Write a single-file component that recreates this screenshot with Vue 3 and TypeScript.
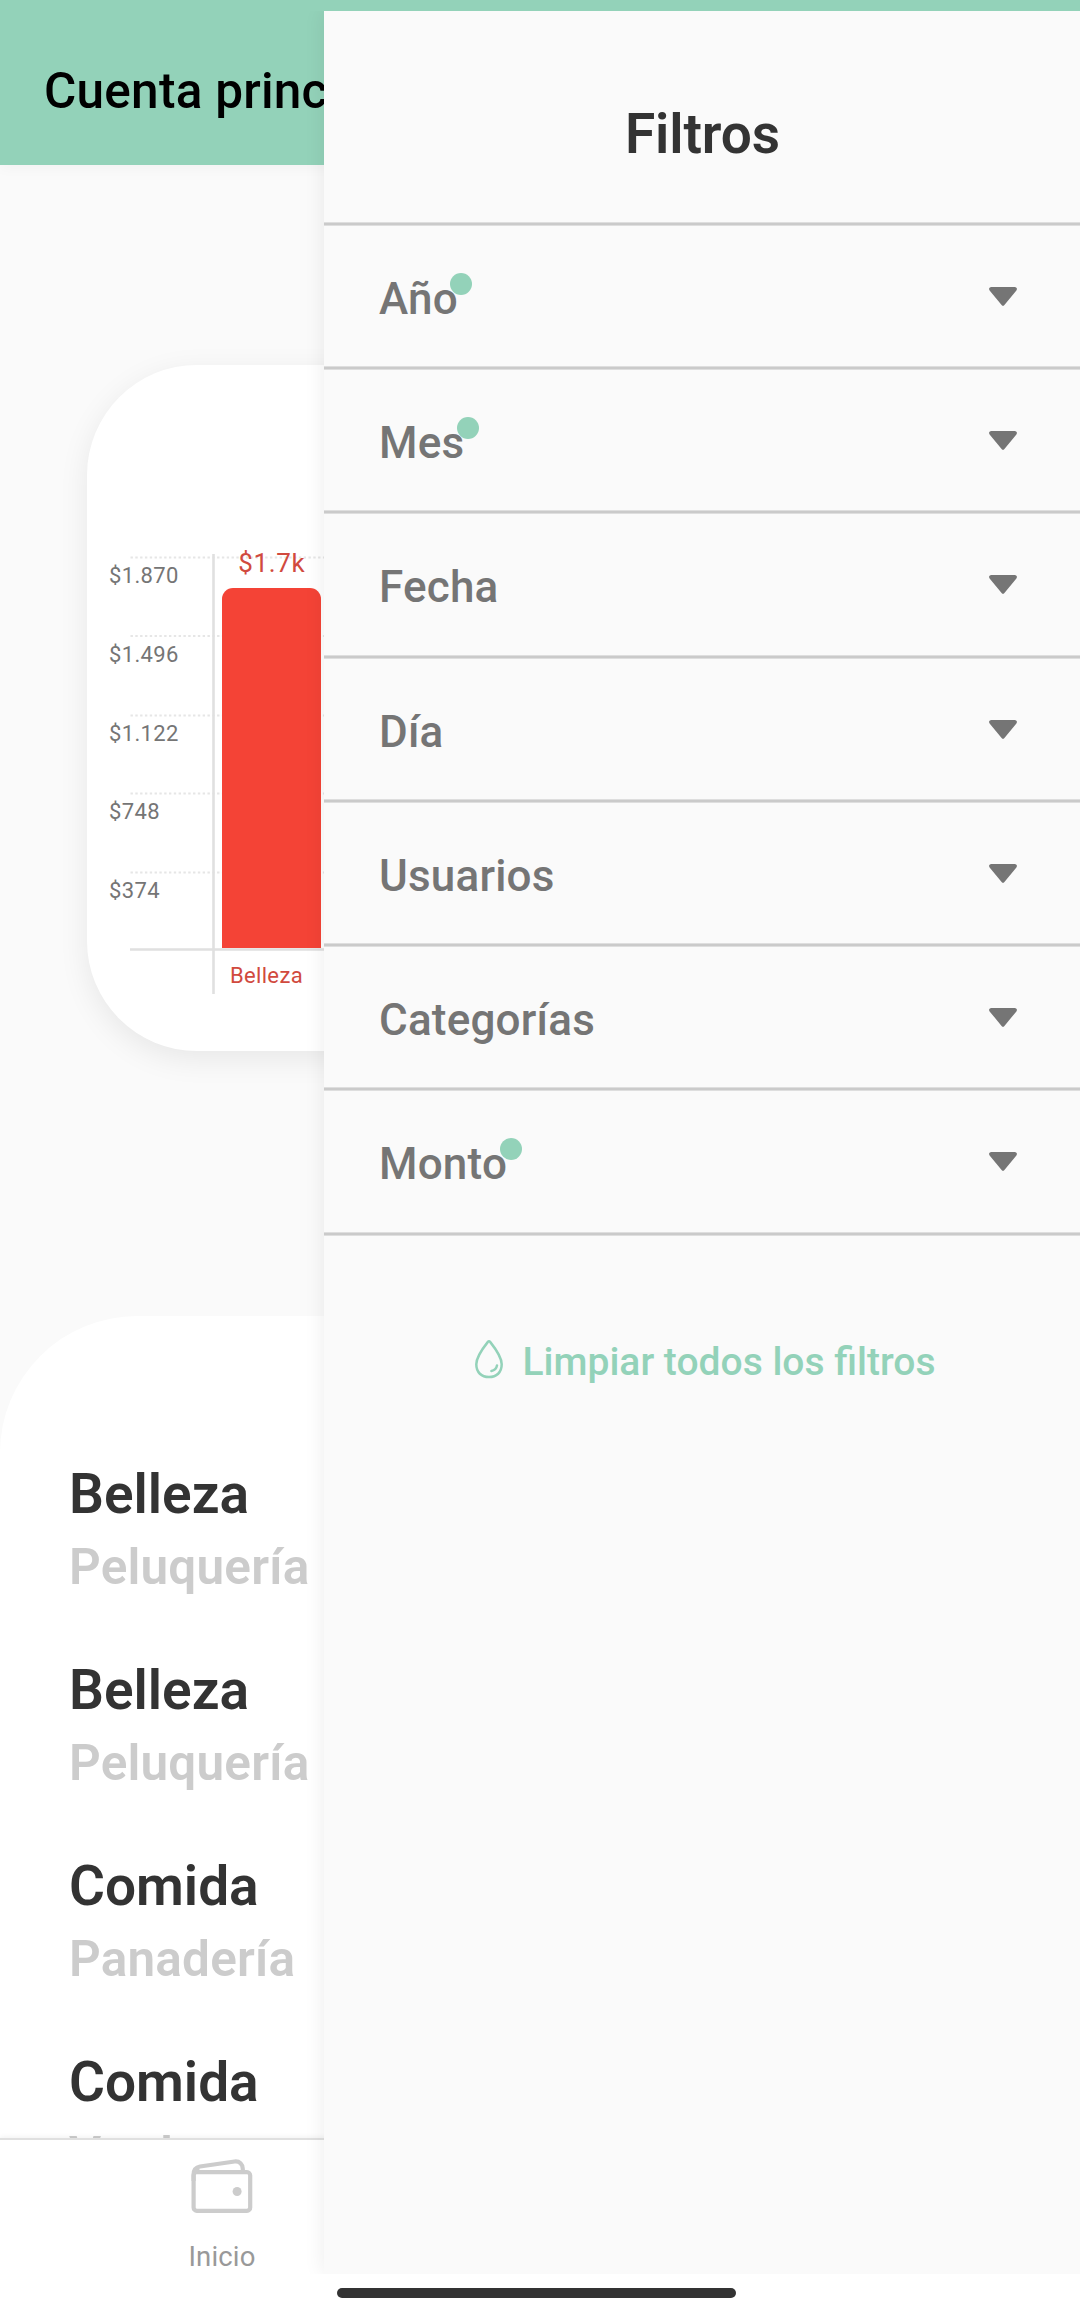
<script setup lang="ts">
interface Filter { label: string; active: boolean }
interface Movement { category: string; detail: string }
interface Tick { label: string; grid: number; base: number }

const filters: Filter[] = [
  { label: 'Año', active: true },
  { label: 'Mes', active: true },
  { label: 'Fecha', active: false },
  { label: 'Día', active: false },
  { label: 'Usuarios', active: false },
  { label: 'Categorías', active: false },
  { label: 'Monto', active: true },
]

const movements: Movement[] = [
  { category: 'Belleza', detail: 'Peluquería' },
  { category: 'Belleza', detail: 'Peluquería' },
  { category: 'Comida', detail: 'Panadería' },
  { category: 'Comida', detail: 'Verdura' },
]

const ticks: Tick[] = [
  { label: '$1.870', grid: 192.5, base: 218 },
  { label: '$1.496', grid: 271, base: 297 },
  { label: '$1.122', grid: 350.5, base: 376 },
  { label: '$748', grid: 428.5, base: 454 },
  { label: '$374', grid: 507.5, base: 533 },
]
</script>

<template>
  <div class="app">
    <div class="screen">
      <header class="topbar"><h1>Cuenta principal</h1></header>
      <main class="content">
        <section class="card">
          <svg class="chart" width="906" height="686" viewBox="0 0 906 686">
            <g class="grid">
              <line v-for="t in ticks" :key="t.label" x1="43.5" x2="906" :y1="t.grid" :y2="t.grid" />
            </g>
            <path class="axis" d="M43 584.5H906M126.5 189V629" />
            <path class="bar" d="M135 583V234a11 11 0 0 1 11-11h77a11 11 0 0 1 11 11V583z" />
            <text v-for="t in ticks" :key="t.label" class="tick" x="22" :y="t.base">{{ t.label }}</text>
            <text class="value" x="151.3" y="207">$1.7k</text>
            <text class="name" x="142.9" y="618">Belleza</text>
          </svg>
        </section>
        <section class="sheet">
          <article v-for="(m, i) in movements" :key="i" class="movement">
            <h2>{{ m.category }}</h2>
            <p>{{ m.detail }}</p>
          </article>
        </section>
      </main>
      <nav class="tabs">
        <div class="tab">
          <svg width="66" height="60" viewBox="0 0 66 60" fill="none" stroke="#ccc" stroke-width="4.2">
            <rect x="4.6" y="17.2" width="56.6" height="38.6" rx="3.2" />
            <path d="M4.6 26V19.5C4.6 15 7.3 12.2 11 11.5L45.6 6.5C50.5 5.9 53.8 9.5 53.8 14V17" />
            <path d="M5.4 17.5L9.5 13.5" />
            <circle cx="48.1" cy="36.5" r="4.5" fill="#ccc" stroke="none" />
          </svg>
          <span>Inicio</span>
        </div>
      </nav>
      <div class="home"><i></i></div>
    </div>

    <div class="overlay">
      <aside class="drawer">
        <div class="drawer-head"><h2>Filtros</h2></div>
        <div v-for="f in filters" :key="f.label" class="filter">
          <span class="label">{{ f.label }}<i v-if="f.active" class="dot"></i></span>
          <svg width="28" height="20" viewBox="0 0 28 20">
            <path d="M2 0H26Q29 .8 27.4 3.4L15.4 17.9Q14 19.6 12.6 17.9L.6 3.4Q-1 .8 2 0z" fill="#757575" />
          </svg>
        </div>
        <button class="clear">
          <svg width="28" height="39" viewBox="0 0 28 39" fill="none" stroke="#93d2b9" stroke-width="2.5">
            <path d="M12.7 2.1Q14 .6 15.3 2.1C20 8 26.7 17 26.7 24.3C26.7 32.5 21.5 37 14 37S1.3 32.5 1.3 24.3C1.3 17 8 8 12.7 2.1z" />
            <path d="M16.4 31Q21.2 30.2 22 25.4" stroke-linecap="round" />
          </svg>
          <span>Limpiar todos los filtros</span>
        </button>
      </aside>
    </div>
  </div>
</template>

<style>
body { margin: 0; }
</style>

<style scoped>
.app {
  position: relative;
  width: 1080px;
  height: 2318px;
  overflow: hidden;
  background: #fafafa;
  font-family: Roboto, "Liberation Sans", sans-serif;
}
h1, h2, p { margin: 0; font-weight: 500; white-space: nowrap; }
.screen { display: flex; flex-direction: column; height: 100%; }
.topbar {
  flex: none;
  box-sizing: border-box;
  height: 165px;
  padding: 62px 0 0 44px;
  background: #93d2b9;
  box-shadow: 0 2px 14px rgba(0, 0, 0, 0.04);
}
.topbar h1 { font-size: 49.5px; line-height: 58px; letter-spacing: 0.25px; color: #000; }
.content { flex: 1; min-height: 0; overflow: hidden; display: flex; flex-direction: column; }
.card {
  flex: none;
  height: 686px;
  margin: 200px 87px 265px;
  border-radius: 110px;
  background: #fff;
  box-shadow: 0 8px 30px rgba(0, 0, 0, 0.08);
}
.chart { display: block; }
.grid line { stroke: #e6e6e6; stroke-width: 2; stroke-dasharray: 2.4 2.41; }
.axis { stroke: #e0e0e0; stroke-width: 2.6; fill: none; }
.bar { fill: #f44336; }
.tick { font-size: 22px; letter-spacing: 0.35px; fill: #757575; }
.value { font-size: 26px; letter-spacing: 0.6px; fill: #d14a3e; }
.name { font-size: 22px; letter-spacing: 0.35px; fill: #d14a3e; }
.sheet {
  flex: none;
  padding: 145px 69px 0;
  border-radius: 137px 137px 0 0;
  background: #fff;
}
.movement { height: 196px; }
.movement h2 { font-size: 55px; line-height: 66px; color: #333; font-weight: 600; }
.movement p { padding-top: 11px; font-size: 49.5px; line-height: 58px; letter-spacing: 0.2px; color: #ccc; font-weight: 600; }
.tabs {
  flex: none;
  display: flex;
  box-sizing: border-box;
  height: 136px;
  border-top: 2px solid #e0e0e0;
  background: #fff;
  box-shadow: 0 -1px 5px rgba(0, 0, 0, 0.06);
}
.tab {
  display: flex;
  flex-direction: column;
  align-items: center;
  width: 443px;
  padding-top: 15px;
  color: #999;
}
.tab span { margin-top: 26px; padding-left: 1px; font-size: 27.5px; line-height: 32px; letter-spacing: 0.15px; }
.home { flex: none; display: flex; justify-content: center; height: 44px; background: #fff; }
.home i { width: 399px; height: 10px; margin: 14px 7px 0 0; border-radius: 5px; background: #333; }

.overlay {
  position: absolute;
  inset: 11px 0 44px 280px;
  overflow: hidden;
}
.drawer {
  height: 100%;
  margin-left: 44px;
  background: #fafafa;
  box-shadow: 0 0 20px rgba(0, 0, 0, 0.08);
}
.drawer-head { height: 210.7px; text-align: center; }
.drawer-head h2 { padding: 90px 0 0 1px; font-size: 55px; line-height: 66px; letter-spacing: -0.1px; color: #333; font-weight: 600; }
.filter {
  box-sizing: border-box;
  display: flex;
  justify-content: space-between;
  align-items: flex-start;
  height: 144.29px;
  padding: 51px 63px 0 55px;
}
.filter, .clear {
  background: linear-gradient(#dedede 0 1px, #cacaca 1px 3px, #dedede 3px 4px) 0 0 / 100% 4px no-repeat;
}
.filter svg { margin-top: 14px; }
.label { position: relative; font-size: 44px; line-height: 52px; letter-spacing: 0.2px; font-weight: 500; color: #757575; }
.dot {
  position: absolute;
  top: 0;
  right: -14.5px;
  width: 22px;
  height: 22px;
  border-radius: 50%;
  background: #93d2b9;
}
.clear {
  box-sizing: border-box;
  display: flex;
  width: 100%;
  justify-content: center;
  align-items: flex-start;
  gap: 20px;
  padding: 107px 0 0 6px;
  border: 0;
  color: #93d2b9;
  font: 500 39px/46px Roboto, "Liberation Sans", sans-serif;
}
.clear svg { margin-top: 1px; }
</style>
